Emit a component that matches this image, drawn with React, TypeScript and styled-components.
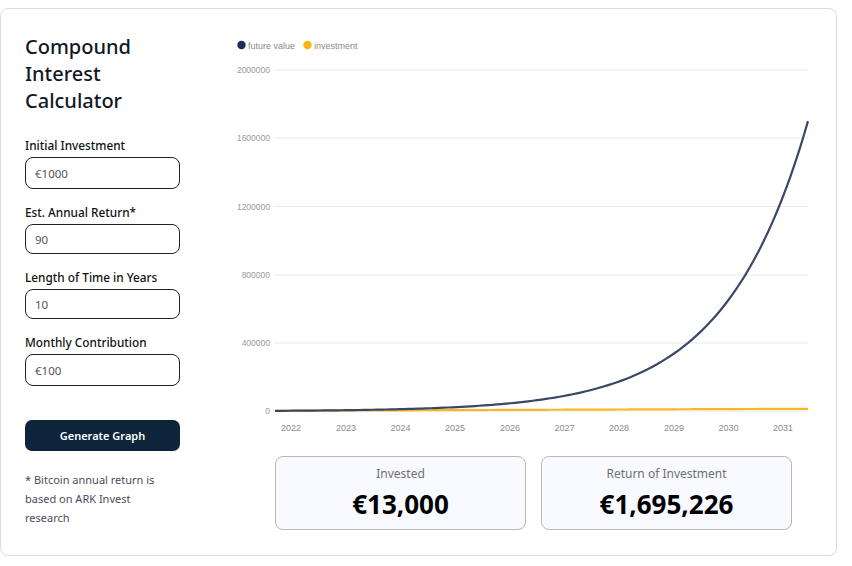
import React from "react";
import styled, { createGlobalStyle } from "styled-components";

const Global = createGlobalStyle`
  html, body { margin: 0; padding: 0; background: #fff; }
  body { font-family: "Noto Sans", "Open Sans", sans-serif; }
  * { box-sizing: border-box; }
`;

const Card = styled.div`
  margin-top: 8px;
  width: 837px;
  height: 548px;
  border: 1px solid #dedede;
  border-radius: 8px;
  display: flex;
  background: #fff;
`;

const Left = styled.div`
  width: 229px;
  flex-shrink: 0;
  padding: 24px 0 0 24px;
  display: flex;
  flex-direction: column;
`;

const Title = styled.h1`
  margin: 0 0 22px;
  font-size: 20px;
  line-height: 27px;
  font-weight: 500;
  color: #121826;
  width: 155px;
`;

const Field = styled.div`
  display: flex;
  flex-direction: column;
  width: 155px;
  margin-bottom: 14px;
`;

const Label = styled.label`
  font-size: 11.8px;
  line-height: 18px;
  font-weight: 500;
  color: #111;
  margin-bottom: 3px;
`;

const Input = styled.div<{ $tall?: boolean }>`
  height: ${(p) => (p.$tall ? 32 : 30)}px;
  border: 1px solid #222;
  border-radius: 8px;
  padding: 0 9px;
  display: flex;
  align-items: center;
  font-size: 11.5px;
  color: #555;
`;

const Button = styled.button`
  margin-top: 20px;
  width: 155px;
  height: 31px;
  border: none;
  border-radius: 7px;
  background: #0d243a;
  color: #fff;
  font-family: "Noto Sans", sans-serif;
  font-size: 11px;
  font-weight: 600;
`;

const Note = styled.p`
  margin: 19px 0 0;
  width: 140px;
  font-size: 11px;
  line-height: 19px;
  color: #4d4a5c;
`;

const Right = styled.div`
  flex: 1;
  padding-top: 24px;
  display: flex;
  flex-direction: column;
`;

const ChartSvg = styled.svg`
  display: block;
  font-family: "Liberation Sans", Arial, sans-serif;
`;

const Summary = styled.div`
  margin: 13px 0 0 45px;
  display: flex;
  gap: 15px;
`;

const Stat = styled.div`
  width: 251px;
  height: 74px;
  border: 1px solid #b9b9b9;
  border-radius: 8px;
  background: #f8faff;
  display: flex;
  flex-direction: column;
  align-items: center;
  padding-top: 9px;
`;

const StatLabel = styled.div`
  font-size: 12px;
  line-height: 16px;
  color: #6f6f6f;
`;

const StatValue = styled.div`
  margin-top: 6px;
  font-size: 26px;
  line-height: 32px;
  font-weight: 700;
  color: #000;
`;

const X0 = 275;
const X1 = 808;
const Y0 = 411;
const PX = 342 / 2000000;

function buildPaths() {
  const rate = Math.pow(1.9, 1 / 12) - 1;
  const months = 120;
  const raw: number[] = [];
  let v = 1000;
  for (let m = 0; m <= months; m++) {
    if (m > 0) v = v * (1 + rate) + 100;
    raw.push(v);
  }
  const scale = 1695226 / raw[months];
  let fv = "";
  let inv = "";
  for (let m = 0; m <= months; m++) {
    const x = X0 + ((X1 - X0) * m) / months;
    const y = Y0 - raw[m] * scale * PX;
    const yi = Y0 - (1000 + 100 * m) * PX;
    fv += `${m === 0 ? "M" : "L"}${x.toFixed(2)},${y.toFixed(2)} `;
    inv += `${m === 0 ? "M" : "L"}${x.toFixed(2)},${yi.toFixed(2)} `;
  }
  return { fv, inv };
}

const yTicks = [
  { v: "2000000", y: 70 },
  { v: "1600000", y: 138 },
  { v: "1200000", y: 206.5 },
  { v: "800000", y: 275 },
  { v: "400000", y: 343 },
  { v: "0", y: 411 },
];

const xTicks = [
  [2022, 291],
  [2023, 346],
  [2024, 400.5],
  [2025, 455],
  [2026, 510],
  [2027, 564.5],
  [2028, 619],
  [2029, 674],
  [2030, 728.5],
  [2031, 783],
];

function Chart() {
  const { fv, inv } = buildPaths();
  return (
    <ChartSvg width={606} height={410} viewBox="230 33 606 410">
      <circle cx={241.5} cy={45} r={4.2} fill="#1b2d52" />
      <text x={248} y={48.5} fontSize={9} fill="#8a8a8a">
        future value
      </text>
      <circle cx={307.5} cy={45} r={4.2} fill="#fbb414" />
      <text x={314} y={48.5} fontSize={9} fill="#8a8a8a">
        investment
      </text>
      {yTicks.map((t) => (
        <g key={t.v}>
          <line x1={274} x2={808} y1={t.y} y2={t.y} stroke="#e9e9e9" strokeWidth={1} />
          <text x={270} y={t.y + 3} fontSize={8.5} fill="#999" textAnchor="end">
            {t.v}
          </text>
        </g>
      ))}
      {xTicks.map(([yr, x]) => (
        <text key={yr} x={x} y={431} fontSize={9} fill="#8a8a8a" textAnchor="middle">
          {yr}
        </text>
      ))}
      <path d={inv} fill="none" stroke="#fbb628" strokeWidth={2.2} />
      <path d={fv} fill="none" stroke="#3a4868" strokeWidth={2.2} strokeLinejoin="round" />
    </ChartSvg>
  );
}

export default function App() {
  return (
    <>
      <Global />
      <Card>
        <Left>
          <Title>Compound Interest Calculator</Title>
          <Field>
            <Label>Initial Investment</Label>
            <Input $tall>€1000</Input>
          </Field>
          <Field>
            <Label>Est. Annual Return*</Label>
            <Input>90</Input>
          </Field>
          <Field>
            <Label>Length of Time in Years</Label>
            <Input>10</Input>
          </Field>
          <Field>
            <Label>Monthly Contribution</Label>
            <Input $tall>€100</Input>
          </Field>
          <Button>Generate Graph</Button>
          <Note>* Bitcoin annual return is based on ARK Invest research</Note>
        </Left>
        <Right>
          <Chart />
          <Summary>
            <Stat>
              <StatLabel>Invested</StatLabel>
              <StatValue>€13,000</StatValue>
            </Stat>
            <Stat>
              <StatLabel>Return of Investment</StatLabel>
              <StatValue>€1,695,226</StatValue>
            </Stat>
          </Summary>
        </Right>
      </Card>
    </>
  );
}
